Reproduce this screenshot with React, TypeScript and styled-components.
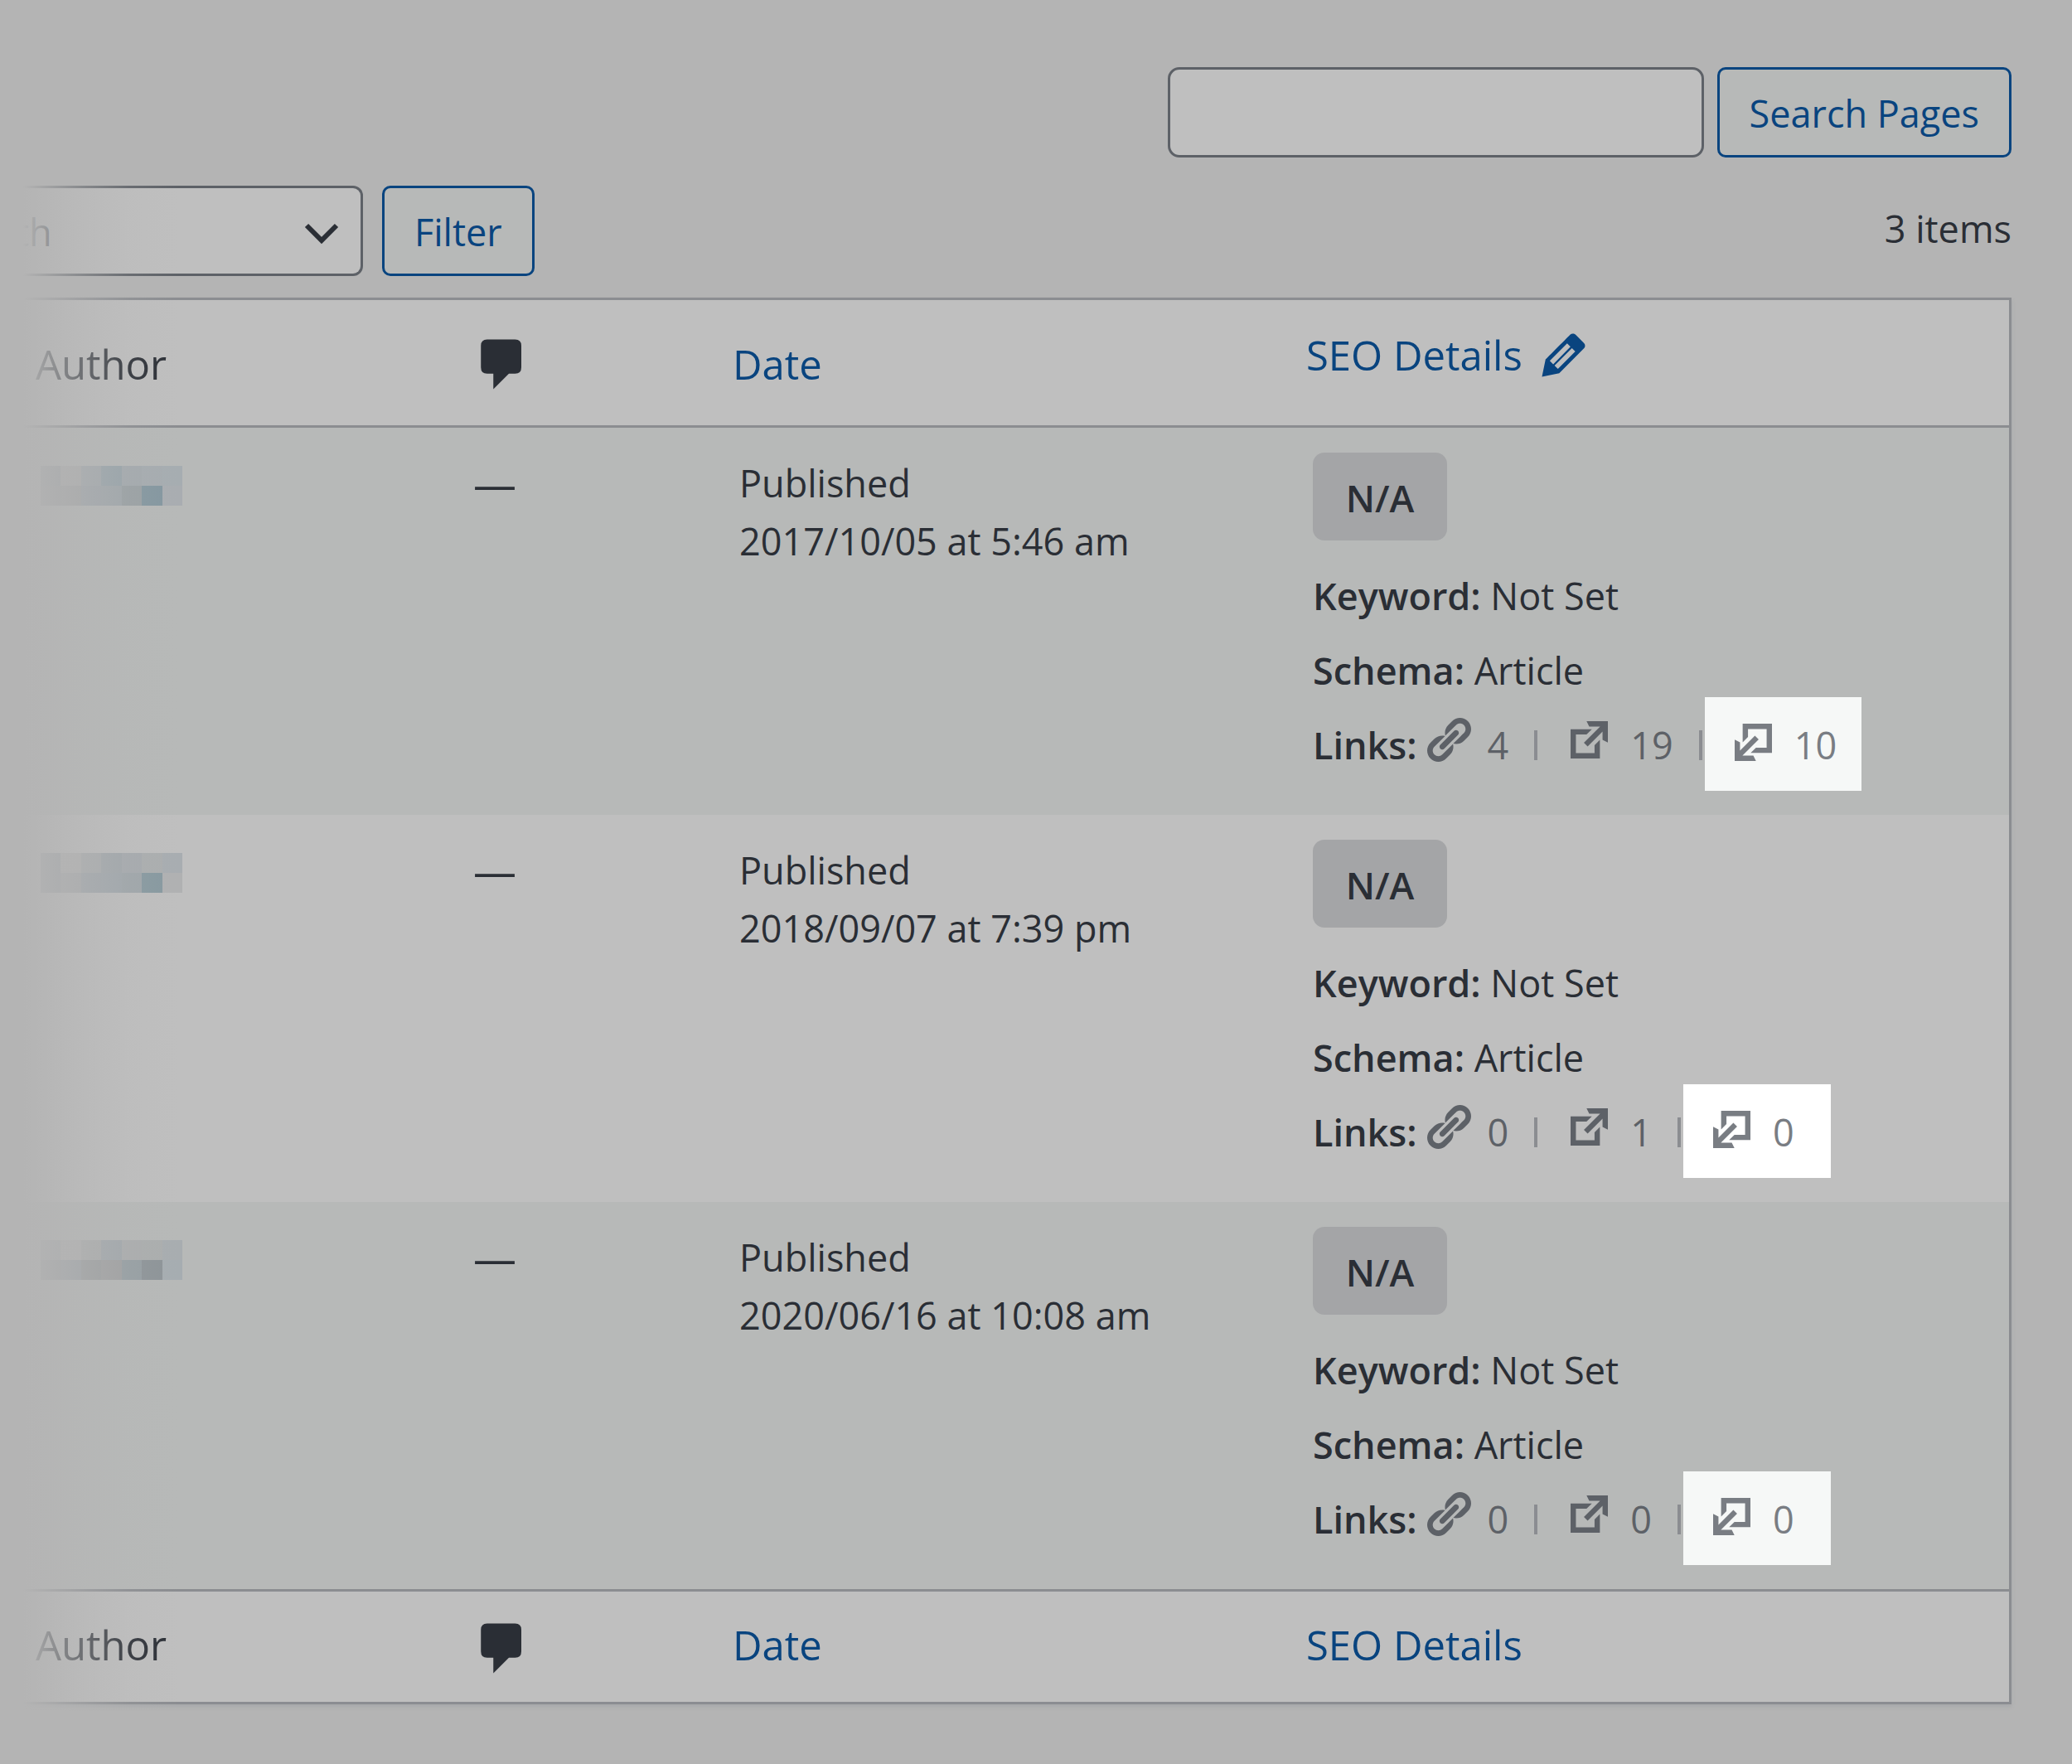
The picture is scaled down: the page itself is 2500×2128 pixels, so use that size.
import React from "react";
import styled, { createGlobalStyle } from "styled-components";

const color = {
  page: "#b4b4b4",
  surface: "#bfbfbf",
  stripe: "#b7b9b8",
  text: "#2a2e35",
  muted: "#5d6167",
  faint: "#797d83",
  line: "#8b8d91",
  field: "#5d6167",
  link: "#09447f",
  badge: "#a4a5a7",
};

const GlobalStyle = createGlobalStyle`
  *, *::before, *::after { box-sizing: border-box; }
  body {
    margin: 0;
    background: ${color.page};
    color: ${color.text};
    font-family: "Open Sans", "Noto Sans", sans-serif;
    font-size: 45px;
    line-height: 70px;
  }
`;

const Page = styled.main`
  position: relative;
  padding: 81px 73px 74px 11px;
`;

const LeftFade = styled.div`
  position: absolute;
  inset: 0 auto 0 0;
  width: 220px;
  pointer-events: none;
  background: linear-gradient(
    to right,
    ${color.page} 28px,
    rgba(180, 180, 180, 0.84) 50px,
    rgba(180, 180, 180, 0.45) 104px,
    rgba(180, 180, 180, 0.14) 156px,
    rgba(180, 180, 180, 0) 216px
  );
`;

const SearchBar = styled.form`
  display: flex;
  justify-content: flex-end;
  gap: 16px;
`;

const SearchField = styled.input`
  width: 647px;
  height: 109px;
  padding: 0 28px;
  border: 3px solid ${color.field};
  border-radius: 14px;
  background: ${color.surface};
  color: inherit;
  font: inherit;
`;

const Button = styled.button`
  height: 109px;
  padding: 2px 36px 0;
  border: 3px solid ${color.link};
  border-radius: 10px;
  background: ${color.stripe};
  color: ${color.link};
  font: inherit;
`;

const Toolbar = styled.div`
  display: flex;
  align-items: flex-start;
  margin: 34px 0 26px;
`;

const SelectWrap = styled.div`
  position: relative;
  width: 427px;
  margin-right: 23px;

  svg {
    position: absolute;
    top: 44px;
    right: 28px;
    pointer-events: none;
  }
`;

const Select = styled.select`
  display: block;
  appearance: none;
  width: 100%;
  height: 109px;
  padding: 2px 90px 0 8px;
  border: 3px solid ${color.field};
  border-left: 0;
  border-radius: 0 12px 12px 0;
  background: ${color.surface};
  color: ${color.text};
  font: inherit;
`;

const ItemCount = styled.span`
  margin-left: auto;
  padding-top: 17px;
`;

const Table = styled.table`
  width: 100%;
  table-layout: fixed;
  border-collapse: separate;
  border-spacing: 0;
  border: 3px solid ${color.line};
  border-left: 0;
  background: ${color.surface};
  box-shadow: 0 3px 4px rgba(130, 138, 146, 0.25);
`;

const Col = styled.col<{ $width?: number }>`
  width: ${(p) => (p.$width ? `${p.$width}px` : "auto")};
`;

const HeadRow = styled.tr`
  height: 154px;
  th { border-bottom: 3px solid ${color.line}; }
`;

const FootRow = styled.tr`
  height: 136px;
  th { border-top: 3px solid ${color.line}; }
`;

const HeadCell = styled.th<{ $top: number }>`
  padding: ${(p) => p.$top}px 0 0 32px;
  vertical-align: top;
  text-align: left;
  font-size: 49px;
  font-weight: 400;
  line-height: 60px;

  svg { display: block; }
`;

const HeadLink = styled.a`
  color: ${color.link};
  text-decoration: none;
`;

const HeadGroup = styled.div`
  display: flex;
  align-items: center;
  gap: 12px;
  height: 60px;
`;

const IconButton = styled.button`
  display: flex;
  padding: 0;
  border: 0;
  background: none;
  color: ${color.link};
`;

const BodyRow = styled.tr`
  height: 467px;
  &:nth-child(odd) { background: ${color.stripe}; }
`;

const Cell = styled.td<{ $top: number; $left?: number }>`
  padding: ${(p) => p.$top}px 0 0 ${(p) => p.$left ?? 40}px;
  vertical-align: top;
`;

const Mosaic = styled.div`
  display: grid;
  grid-template-columns: repeat(7, 1fr);
  grid-auto-rows: 24px;
  width: 171px;
`;

const Tile = styled.span<{ $shade: string }>`
  background: ${(p) => p.$shade};
`;

const Dash = styled.span`
  font-size: 52px;
`;

const SeoStack = styled.div`
  display: flex;
  flex-direction: column;
  align-items: flex-start;
  gap: 20px;
`;

const Badge = styled.span`
  min-width: 162px;
  height: 106px;
  margin-bottom: 12px;
  padding-top: 4px;
  border-radius: 14px;
  background: ${color.badge};
  font-weight: 600;
  line-height: 102px;
  text-align: center;
`;

const Detail = styled.div`
  b { font-weight: 600; }
`;

const LinksRow = styled.div`
  display: flex;
  align-items: center;
  height: 70px;
  color: ${color.muted};

  b {
    margin-right: 12px;
    color: ${color.text};
    font-weight: 600;
  }
`;

const Count = styled.span<{ $gap: number }>`
  display: flex;
  align-items: center;
  gap: ${(p) => p.$gap}px;

  svg { margin-bottom: 14px; }
`;

const Divider = styled.span<{ $after: number }>`
  width: 4px;
  height: 36px;
  margin: 0 ${(p) => p.$after}px 0 31px;
  background: ${color.line};
`;

const Highlight = styled.span<{ $bright: boolean }>`
  display: flex;
  align-items: center;
  gap: 27px;
  min-width: 178px;
  height: 113px;
  margin-bottom: 4px;
  padding: 4px 30px 0 36px;
  background: ${(p) => (p.$bright ? "#ffffff" : "#f6f8f7")};
  color: ${color.faint};

  svg { margin-bottom: 8px; }
`;

const ChevronIcon = () => (
  <svg width="44" height="28" viewBox="0 0 44 28" aria-hidden="true">
    <path d="M4 4l18 18L40 4" fill="none" stroke={color.text} strokeWidth="6" />
  </svg>
);

const CommentIcon = () => (
  <svg width="75" height="75" viewBox="0 0 20 20" fill={color.text} role="img" aria-label="Comments">
    <path d="M5 2h9q2 0 2 2v7q0 2-2 2h-2l-5 5v-5H5q-2 0-2-2V4q0-2 2-2z" />
  </svg>
);

const PencilIcon = () => (
  <svg width="75" height="75" viewBox="0 0 20 20" fill="currentColor" aria-hidden="true">
    <path d="M13.89 3.39l2.71 2.72c.46.46.42 1.24.03 1.64l-8.01 8.02-5.56 1.16 1.16-5.58s7.6-7.63 7.99-8.03c.39-.39 1.22-.39 1.68.07zm-2.73 2.79l-5.59 5.61 1.11 1.11 5.54-5.65zm-2.97 8.23l5.58-5.6-1.07-1.08-5.59 5.6z" />
  </svg>
);

const ChainIcon = () => (
  <svg width="53" height="53" viewBox="2 1.5 17 17" fill="currentColor" aria-hidden="true">
    <path d="M17.74 2.76c1.68 1.69 1.68 4.41 0 6.1l-1.53 1.52c-1.12 1.12-2.7 1.47-4.14 1.09l2.62-2.61.76-.77.76-.76c.84-.84.84-2.2 0-3.04-.84-.85-2.2-.85-3.04 0l-.77.76-3.38 3.38c-.37-1.44-.02-3.02 1.1-4.14l1.52-1.53c1.69-1.68 4.42-1.68 6.1 0zM8.59 13.43l5.34-5.34c.42-.42.42-1.1 0-1.52-.44-.43-1.13-.39-1.53 0l-5.33 5.34c-.42.42-.42 1.1 0 1.52.44.43 1.13.39 1.52 0zm-.76 2.29l4.14-4.15c.38 1.44.03 3.02-1.09 4.14l-1.52 1.53c-1.69 1.68-4.41 1.68-6.1 0-1.68-1.68-1.68-4.42 0-6.1l1.53-1.52c1.12-1.12 2.7-1.47 4.14-1.1l-4.14 4.15c-.85.84-.85 2.2 0 3.05.84.84 2.2.84 3.04 0z" />
  </svg>
);

const BoxArrowIcon = ({ inbound = false }: { inbound?: boolean }) => (
  <svg width="45" height="45" viewBox="3 3 14 14" fill="currentColor" aria-hidden="true">
    <path
      transform={inbound ? "rotate(180 10 10)" : undefined}
      d="M9 3h8v8l-2-1V6.92l-5.6 5.59-1.41-1.41L14.08 5H10zm3 12v-3l2-2v7H3V6h8L9 8H5v7h7z"
    />
  </svg>
);

type PageRow = {
  date: string;
  internal: number;
  external: number;
  incoming: number;
  shades: string[];
};

const rows: PageRow[] = [
  {
    date: "2017/10/05 at 5:46 am",
    internal: 4,
    external: 19,
    incoming: 10,
    shades: [
      "#9fa3a6", "#adaeae", "#a3a9ad", "#98a4aa", "#a4aaae", "#a6acb0", "#a6adb1",
      "#a2a4a6", "#a4a6a7", "#a0a6ab", "#a0a7ab", "#9aa1a4", "#8497a0", "#a9adb1",
    ],
  },
  {
    date: "2018/09/07 at 7:39 pm",
    internal: 0,
    external: 1,
    incoming: 0,
    shades: [
      "#a0a4a8", "#b2b2b2", "#a9acae", "#a1a7ab", "#a6aaae", "#abaeaf", "#a8adb1",
      "#a0a4a8", "#a8aaac", "#a0a6ab", "#a0a7ac", "#9fa6aa", "#8799a0", "#b0b1b2",
    ],
  },
  {
    date: "2020/06/16 at 10:08 am",
    internal: 0,
    external: 0,
    incoming: 0,
    shades: [
      "#a8abad", "#b2b2b2", "#abadad", "#a2a8ac", "#abadae", "#abaeae", "#a8adb0",
      "#9fa2a4", "#9fa4a8", "#9c9fa0", "#a0a1a2", "#969fa3", "#8d9498", "#a6adb1",
    ],
  },
];

const Row = ({ row, bright }: { row: PageRow; bright: boolean }) => (
  <BodyRow>
    <Cell $top={46} $left={38}>
      <Mosaic>
        {row.shades.map((shade, i) => (
          <Tile key={i} $shade={shade} />
        ))}
      </Mosaic>
    </Cell>
    <Cell $top={32} $left={34}>
      <Dash>—</Dash>
    </Cell>
    <Cell $top={32}>
      Published
      <br />
      {row.date}
    </Cell>
    <Cell $top={30}>
      <SeoStack>
        <Badge>N/A</Badge>
        <Detail>
          <b>Keyword:</b> Not Set
        </Detail>
        <Detail>
          <b>Schema:</b> Article
        </Detail>
        <LinksRow>
          <b>Links:</b>
          <Count $gap={20}>
            <ChainIcon />
            {row.internal}
          </Count>
          <Divider $after={40} />
          <Count $gap={27}>
            <BoxArrowIcon />
            {row.external}
          </Count>
          <Divider $after={3} />
          <Highlight $bright={bright}>
            <BoxArrowIcon inbound />
            {row.incoming}
          </Highlight>
        </LinksRow>
      </SeoStack>
    </Cell>
  </BodyRow>
);

export default function App() {
  return (
    <>
      <GlobalStyle />
      <Page>
        <SearchBar onSubmit={(e) => e.preventDefault()}>
          <SearchField type="text" aria-label="Search Pages" />
          <Button type="submit">Search Pages</Button>
        </SearchBar>
        <Toolbar>
          <SelectWrap>
            <Select aria-label="Filter pages">
              <option>th</option>
            </Select>
            <ChevronIcon />
          </SelectWrap>
          <Button type="button">Filter</Button>
          <ItemCount>3 items</ItemCount>
        </Toolbar>
        <Table>
          <colgroup>
            <Col $width={526} />
            <Col $width={315} />
            <Col $width={692} />
            <Col />
          </colgroup>
          <thead>
            <HeadRow>
              <HeadCell $top={47}>Author</HeadCell>
              <HeadCell $top={40}>
                <CommentIcon />
              </HeadCell>
              <HeadCell $top={47}>
                <HeadLink href="#date">Date</HeadLink>
              </HeadCell>
              <HeadCell $top={36}>
                <HeadGroup>
                  <HeadLink href="#seo">SEO Details</HeadLink>
                  <IconButton type="button" aria-label="Edit SEO details">
                    <PencilIcon />
                  </IconButton>
                </HeadGroup>
              </HeadCell>
            </HeadRow>
          </thead>
          <tbody>
            {rows.map((row, i) => (
              <Row key={row.date} row={row} bright={i === 1} />
            ))}
          </tbody>
          <tfoot>
            <FootRow>
              <HeadCell $top={34}>Author</HeadCell>
              <HeadCell $top={31}>
                <CommentIcon />
              </HeadCell>
              <HeadCell $top={34}>
                <HeadLink href="#date">Date</HeadLink>
              </HeadCell>
              <HeadCell $top={34}>
                <HeadLink href="#seo">SEO Details</HeadLink>
              </HeadCell>
            </FootRow>
          </tfoot>
        </Table>
        <LeftFade />
      </Page>
    </>
  );
}
